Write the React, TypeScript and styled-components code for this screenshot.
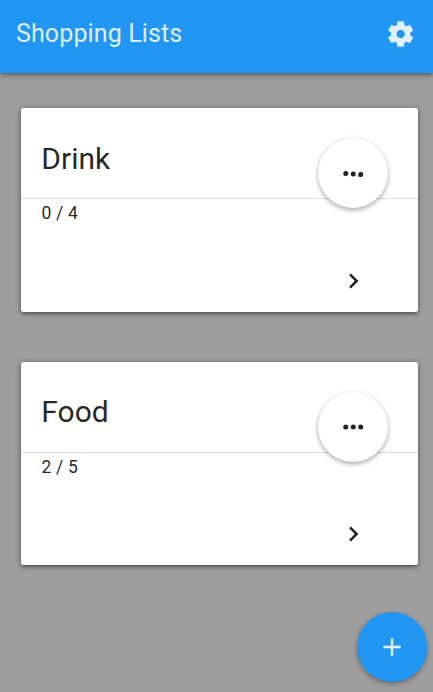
import React from "react";
import styled, { createGlobalStyle } from "styled-components";

const GlobalStyle = createGlobalStyle`
  * { box-sizing: border-box; }
  body {
    margin: 0;
    background: #9e9e9e;
    color: rgba(0, 0, 0, 0.87);
    font-family: Roboto, "Liberation Sans", sans-serif;
    overflow: hidden;
  }
`;

const Page = styled.div`
  position: relative;
  height: 100vh;
  display: flex;
  flex-direction: column;
`;

const Toolbar = styled.header`
  display: flex;
  flex: none;
  align-items: center;
  justify-content: space-between;
  height: 73px;
  padding: 0 18px 5px 16px;
  background: #2196f3;
  color: rgba(255, 255, 255, 0.87);
  box-shadow: 0 2px 5px rgba(0, 0, 0, 0.44);
`;

const Title = styled.h1`
  margin: 0;
  font-size: 25px;
  font-weight: 400;
  line-height: 30px;
  letter-spacing: 0.12px;
`;

const Icon = styled.svg<{ $tilt?: number }>`
  display: block;
  width: 30px;
  height: 30px;
  fill: currentColor;
  transform: ${({ $tilt }) => ($tilt ? `rotate(${$tilt}deg)` : "none")};
`;

const SettingsIcon = styled(Icon)`
  stroke: currentColor;
  stroke-width: 0.3px;
`;

const Lists = styled.main`
  display: flex;
  flex-direction: column;
  gap: 50px;
  padding: 35px 15px 0 21px;
`;

const Card = styled.article`
  position: relative;
  display: flex;
  flex-direction: column;
  height: 203.6px;
  background: #fff;
  border-radius: 2.5px;
  box-shadow: 0 1px 6px rgba(0, 0, 0, 0.38), 0 2px 3px rgba(0, 0, 0, 0.25);
`;

const CardHeader = styled.div`
  height: 91px;
  padding: 30.6px 20.3px 0;
  border-bottom: 1px solid #dcdcdc;
`;

const CardTitle = styled.h2`
  margin: 0;
  font-size: 30px;
  font-weight: 400;
  line-height: 40px;
`;

const Count = styled.div`
  padding: 2px 20.6px 0;
  font-size: 17.5px;
  line-height: 24px;
  letter-spacing: 0.15px;
`;

const OpenButton = styled.button`
  margin: auto 50px 16px auto;
  padding: 0;
  border: 0;
  background: none;
  color: inherit;
`;

const RoundButton = styled.button`
  position: absolute;
  display: flex;
  align-items: center;
  justify-content: center;
  width: 70px;
  height: 70px;
  padding: 0;
  border: 0;
  border-radius: 50%;
  box-shadow: 0 2px 5px rgba(0, 0, 0, 0.35);
`;

const MenuButton = styled(RoundButton)`
  top: 30px;
  right: 30px;
  padding: 1px 0 0 0.6px;
  background: #fff;
  color: rgba(0, 0, 0, 0.87);
`;

const AddButton = styled(RoundButton)`
  right: 6px;
  bottom: 10px;
  background: #2196f3;
  color: rgba(255, 255, 255, 0.87);
`;

const lists = [
  { name: "Drink", done: 0, total: 4, tilt: 4.5 },
  { name: "Food", done: 2, total: 5, tilt: 0 },
];

export default function App() {
  return (
    <>
      <GlobalStyle />
      <Page>
        <Toolbar>
          <Title>Shopping Lists</Title>
          <SettingsIcon viewBox="-0.5 0 24 24">
            <path d="M19.43 12.98c.04-.32.07-.64.07-.98s-.03-.66-.07-.98l2.11-1.65c.19-.15.24-.42.12-.64l-2-3.46c-.12-.22-.39-.3-.61-.22l-2.49 1c-.52-.4-1.08-.73-1.69-.98l-.38-2.65C14.46 2.18 14.25 2 14 2h-4c-.25 0-.46.18-.49.42l-.38 2.65c-.61.25-1.17.59-1.69.98l-2.49-1c-.23-.09-.49 0-.61.22l-2 3.46c-.13.22-.07.49.12.64l2.11 1.65c-.04.32-.07.65-.07.98s.03.66.07.98l-2.11 1.65c-.19.15-.24.42-.12.64l2 3.46c.12.22.39.3.61.22l2.49-1c.52.4 1.08.73 1.69.98l.38 2.65c.03.24.24.42.49.42h4c.25 0 .46-.18.49-.42l.38-2.65c.61-.25 1.17-.59 1.69-.98l2.49 1c.23.09.49 0 .61-.22l2-3.46c.12-.22.07-.49-.12-.64l-2.11-1.65zM12 15.5c-1.93 0-3.5-1.57-3.5-3.5s1.57-3.5 3.5-3.5 3.5 1.57 3.5 3.5-1.57 3.5-3.5 3.5z" />
          </SettingsIcon>
        </Toolbar>
        <Lists>
          {lists.map((list) => (
            <Card key={list.name}>
              <CardHeader>
                <CardTitle>{list.name}</CardTitle>
              </CardHeader>
              <Count>
                {list.done} / {list.total}
              </Count>
              <OpenButton aria-label="Open list">
                <Icon viewBox="-0.3 0 24 24">
                  <path d="M10 6L8.59 7.41 13.17 12l-4.58 4.59L10 18l6-6z" />
                </Icon>
              </OpenButton>
              <MenuButton aria-label="List options">
                <Icon viewBox="-0.2 0 24 24" $tilt={list.tilt}>
                  <circle cx="6" cy="12" r="2" />
                  <circle cx="12" cy="12" r="2" />
                  <circle cx="18" cy="12" r="2" />
                </Icon>
              </MenuButton>
            </Card>
          ))}
        </Lists>
        <AddButton aria-label="Add list">
          <Icon viewBox="0 0 24 24">
            <path d="M19 13h-6v6h-2v-6H5v-2h6V5h2v6h6v2z" />
          </Icon>
        </AddButton>
      </Page>
    </>
  );
}
